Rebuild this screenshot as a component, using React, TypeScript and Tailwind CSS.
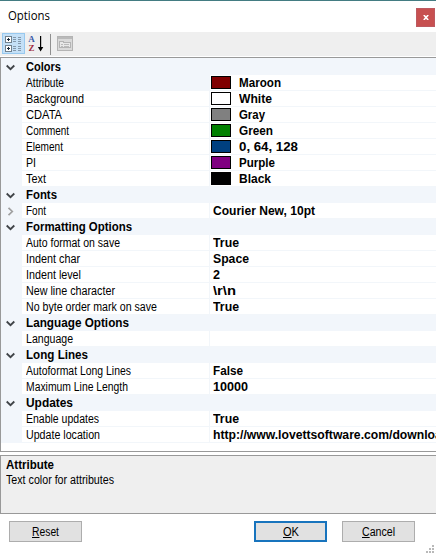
import { useLayoutEffect, useRef, useState, type ReactNode } from "react";
import { clsx } from "clsx";

type Item = { label: string; w: number; value?: string; vw?: number; color?: string; nested?: boolean };
type Group = { title: string; w: number; items: Item[] };

const groups: Group[] = [
  {
    title: "Colors",
    w: 35,
    items: [
      { label: "Attribute", w: 38, value: "Maroon", vw: 42, color: "bg-[#800000]" },
      { label: "Background", w: 58, value: "White", vw: 33, color: "bg-white" },
      { label: "CDATA", w: 36, value: "Gray", vw: 26, color: "bg-[#808080]" },
      { label: "Comment", w: 43, value: "Green", vw: 34, color: "bg-[#008000]" },
      { label: "Element", w: 37, value: "0, 64, 128", vw: 59, color: "bg-[#004080]" },
      { label: "PI", w: 10, value: "Purple", vw: 36, color: "bg-[#800080]" },
      { label: "Text", w: 20, value: "Black", vw: 32, color: "bg-black" },
    ],
  },
  { title: "Fonts", w: 31, items: [{ label: "Font", w: 20, value: "Courier New, 10pt", vw: 102, nested: true }] },
  {
    title: "Formatting Options",
    w: 106,
    items: [
      { label: "Auto format on save", w: 94, value: "True", vw: 26 },
      { label: "Indent char", w: 54, value: "Space", vw: 36 },
      { label: "Indent level", w: 55, value: "2", vw: 7 },
      { label: "New line character", w: 89, value: "\\r\\n", vw: 23 },
      { label: "No byte order mark on save", w: 131, value: "True", vw: 26 },
    ],
  },
  { title: "Language Options", w: 103, items: [{ label: "Language", w: 47 }] },
  {
    title: "Long Lines",
    w: 62,
    items: [
      { label: "Autoformat Long Lines", w: 105, value: "False", vw: 30 },
      { label: "Maximum Line Length", w: 102, value: "10000", vw: 35 },
    ],
  },
  {
    title: "Updates",
    w: 47,
    items: [
      { label: "Enable updates", w: 73, value: "True", vw: 26 },
      { label: "Update location", w: 74, value: "http://www.lovettsoftware.com/downloads", vw: 243 },
    ],
  },
];

/** Text condensed or widened horizontally so that it takes up the given width. */
function Fit({ w, className, children }: { w: number; className?: string; children: ReactNode }) {
  const ref = useRef<HTMLSpanElement>(null);
  const [scale, setScale] = useState(1);
  useLayoutEffect(() => {
    const el = ref.current;
    if (!el) return;
    el.style.transform = "none";
    const next = w / el.getBoundingClientRect().width;
    el.style.transform = `scaleX(${next})`;
    setScale(next);
  }, [w]);
  return (
    <span className={clsx("block shrink-0", className)} style={{ width: w }}>
      <span ref={ref} className="inline-block origin-left whitespace-pre" style={{ transform: `scaleX(${scale})` }}>
        {children}
      </span>
    </span>
  );
}

function Chevron({ right = false }: { right?: boolean }) {
  return right ? (
    <svg className="h-[9px] w-[9px]" viewBox="0 0 9 9" fill="none" stroke="#a0a0a0" strokeWidth="1.7">
      <path d="M2.5 .8 6.3 4.5 2.5 8.2" />
    </svg>
  ) : (
    <svg className="h-[9px] w-[9px]" viewBox="0 0 9 9" fill="none" stroke="#404448" strokeWidth="1.8">
      <path d="M.7 2.5 4.5 6.2 8.3 2.5" />
    </svg>
  );
}

function Row({ item, selected }: { item: Item; selected: boolean }) {
  return (
    <div className="flex h-4">
      <div className="flex w-[21px] shrink-0 items-center pl-[5px]">{item.nested && <Chevron right />}</div>
      <div
        className={clsx(
          "w-[187px] shrink-0 border-b border-[#f2f6fa] pl-1 leading-4",
          selected ? "bg-[#f2f6fb]" : "bg-white",
        )}
      >
        <Fit w={item.w}>{item.label}</Fit>
      </div>
      <div className="flex min-w-0 flex-1 overflow-hidden border-b border-l border-[#f2f6fa] bg-white font-bold">
        {item.color && <div className={clsx("mt-px ml-px h-[13px] w-5 shrink-0 border border-black", item.color)} />}
        {item.value && (
          <Fit w={item.vw ?? 0} className={clsx("text-[12px] leading-4", item.color ? "ml-2" : "ml-[3px]")}>
            {item.value}
          </Fit>
        )}
      </div>
    </div>
  );
}

function ToolbarIcons() {
  return (
    <div className="flex h-6 items-start bg-[#efefef] pt-px pl-[2px]">
      <div className="h-[21px] w-[23px] border border-[#98c9ef] bg-[#c4e0f7]">
        <svg className="h-[19px] w-[21px]" viewBox="0 0 21 19" shapeRendering="crispEdges">
          <rect x="2.5" y="2.5" width="6" height="6" rx="1" fill="#fff" stroke="#71818d" />
          <rect x="2.5" y="11.5" width="6" height="6" rx="1" fill="#fff" stroke="#71818d" />
          <path d="M4 5.5h3M5.5 4v3M4 14.5h3M5.5 13v3" stroke="#182838" />
          <path
            d="M10 3.5h3M10 5.5h3M10 7.5h3M10 12.5h3M10 14.5h3M10 16.5h3M15 3.5h3M15 5.5h3M15 7.5h3M15 9.5h3M15 12.5h3M15 14.5h3M15 16.5h3"
            stroke="#8398ab"
          />
        </svg>
      </div>
      <div className="ml-[3px] flex w-[7px] flex-col items-center pt-[2px] font-['Liberation_Serif',serif] text-[9px] leading-[9px] font-bold">
        <span className="h-[9px] overflow-hidden text-[#3858a8]">A</span>
        <span className="h-[9px] overflow-hidden text-[#a02c3c]">Z</span>
      </div>
      <svg className="mt-[3px] ml-[2px] h-4 w-[7px]" viewBox="0 0 7 16" fill="#000">
        <path d="M3 0h1.2v11H6.3L3.6 15.5.9 11H3z" />
      </svg>
      <div className="mt-px ml-[6px] h-[21px] w-px bg-[#909090]" />
      <svg className="mt-[3px] ml-[6px] h-[15px] w-4" viewBox="0 0 16 15" fill="none" shapeRendering="crispEdges">
        <rect x=".5" y=".5" width="15" height="14" fill="#dadada" stroke="#b4b4b4" />
        <path d="M1 2h14" stroke="#bababa" strokeWidth="2" />
        <path d="M2.5 11.5v-6h4v1h7v5z" fill="#e8e8e8" stroke="#b4b4b4" />
        <path d="M4 8.5h2M7 8.5h5M4 10.5h2M7 10.5h5" stroke="#bababa" />
      </svg>
    </div>
  );
}

function Button({ children, w, primary = false }: { children: ReactNode; w: number; primary?: boolean }) {
  return (
    <button
      className={clsx(
        "flex h-[21px] w-[73px] items-center justify-center bg-[#e1e1e1]",
        primary ? "border-2 border-[#1874bd]" : "border border-[#adadad]",
      )}
    >
      <Fit w={w}>{children}</Fit>
    </button>
  );
}

export default function App() {
  return (
    <div className="flex h-[555px] w-[436px] flex-col overflow-hidden border-t border-[#437c82] bg-white font-['Liberation_Sans',Arial,sans-serif] text-[12px] text-black">
      <header className="flex h-[31px] shrink-0 justify-between">
        <Fit w={42} className="mt-[6px] ml-2 font-['Open_Sans','Noto_Sans',sans-serif] leading-[18px]">
          Options
        </Fit>
        <button className="mt-[7px] mr-px flex h-[19px] w-[19px] items-center justify-center border border-[#bd5960] bg-[#c75050]">
          <svg className="h-[5px] w-[6px]" viewBox="0 0 6 5" fill="none" stroke="#fff" strokeWidth="1.6">
            <path d="M.8 0 5.2 5M5.2 0 .8 5" />
          </svg>
        </button>
      </header>
      <ToolbarIcons />
      <main className="mt-px h-[395px] shrink-0 border-y border-l border-[#999] bg-white">
        <div className="bg-[#f2f6fb] pt-px">
          {groups.map((g) => (
            <section key={g.title}>
              <div className="flex h-4">
                <div className="flex w-[25px] shrink-0 items-center pl-[5px]">
                  <Chevron />
                </div>
                <Fit w={g.w} className="leading-4 font-bold">
                  {g.title}
                </Fit>
              </div>
              {g.items.map((it) => (
                <Row key={it.label} item={it} selected={it.label === "Attribute"} />
              ))}
            </section>
          ))}
        </div>
      </main>
      <section className="mt-[3px] flex h-[59px] shrink-0 flex-col items-start border-y border-l border-[#999] bg-[#efefef] pt-px pl-[5px]">
        <Fit w={48} className="leading-4 font-bold">
          Attribute
        </Fit>
        <Fit w={108} className="leading-[15px]">
          Text color for attributes
        </Fit>
      </section>
      <footer className="mt-[7px] flex pl-[9px]">
        <Button w={27}>
          <u>R</u>eset
        </Button>
        <div className="ml-[172px]">
          <Button w={16} primary>
            <u>O</u>K
          </Button>
        </div>
        <div className="ml-[15px]">
          <Button w={33}>
            <u>C</u>ancel
          </Button>
        </div>
      </footer>
      <svg className="mt-[3px] mr-[2px] h-2 w-2 self-end" viewBox="0 0 8 8" fill="#b9b9b9" shapeRendering="crispEdges">
        <path d="M6 0h2v2H6zM3 3h2v2H3zM6 3h2v2H6zM0 6h2v2H0zM3 6h2v2H3zM6 6h2v2H6z" />
      </svg>
    </div>
  );
}
